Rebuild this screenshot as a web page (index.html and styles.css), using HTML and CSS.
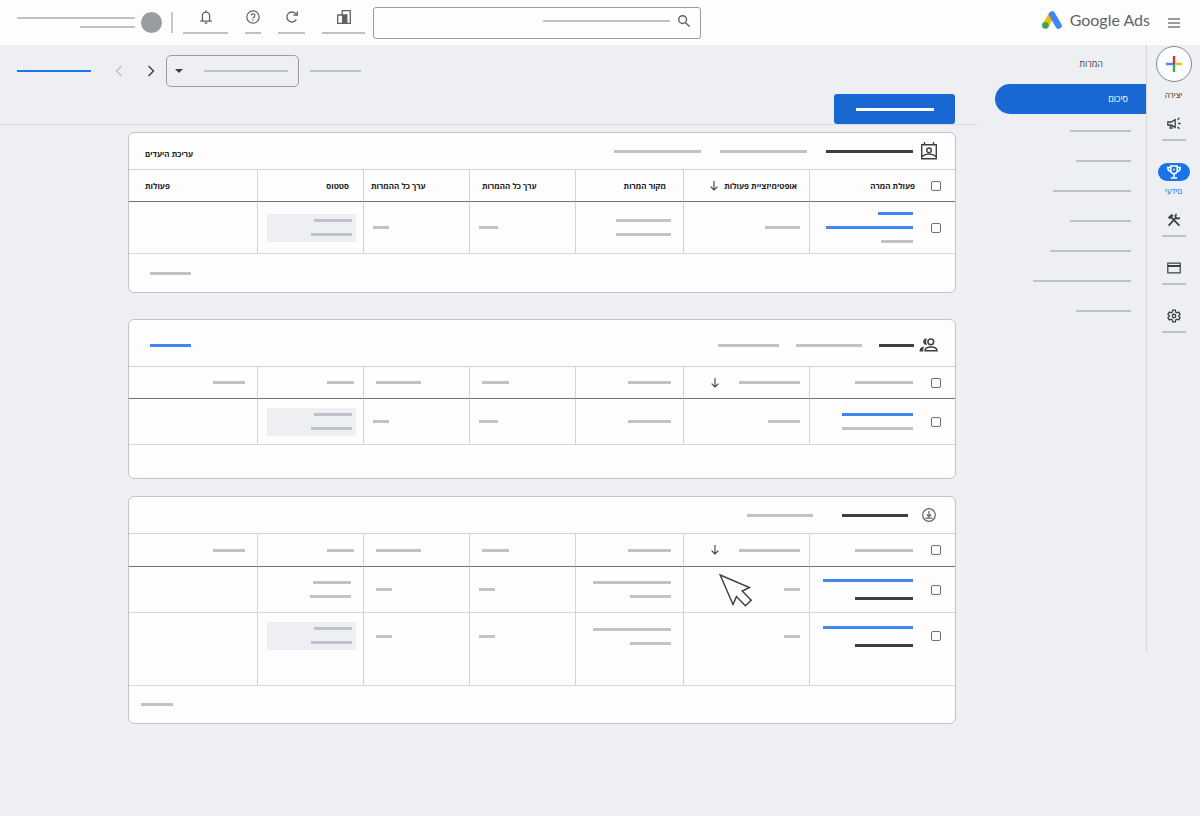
FILE: index.html
```html
<!DOCTYPE html>
<html lang="he" dir="rtl">
<head>
    <meta charset="UTF-8">
    <meta name="viewport" content="width=device-width, initial-scale=1.0">
    <title>Google Ads</title>
    <link rel="stylesheet" href="styles.css">
</head>
<body>

    <header class="header">
        <button class="icon-btn menu-btn" type="button">
            <svg width="12" height="10" viewBox="0 0 12 10"><path d="M0 1h12M0 5h12M0 9h12" stroke="#777a7d" stroke-width="1.4"/></svg>
        </button>
        <a class="logo" href="#" dir="ltr">
            <svg width="20" height="18" viewBox="0 0 20 18">
                <path d="M3.4 14.6L9.4 4.2" stroke="#fbbc04" stroke-width="6.4"/>
                <path d="M10 3.4L16.6 14.6" stroke="#4285f4" stroke-width="6.4" stroke-linecap="round"/>
                <circle cx="3.4" cy="14.4" r="3.3" fill="#34a853"/>
            </svg>
            <span>Google Ads</span>
        </a>
        <label class="search">
            <svg width="12" height="12" viewBox="0 0 12 12" fill="none" stroke="#5f6368" stroke-width="1.4"><circle cx="4.6" cy="4.6" r="3.9"/><path d="M7.4 7.4L11.6 11.6"/></svg>
            <input type="search">
        </label>
        <div class="tools">
            <button class="tool" type="button">
                <svg width="14" height="14" viewBox="0 0 14 14" fill="none" stroke="#5f6368" stroke-width="1.3"><path d="M.7 5v8.3h12.6V.7H5.2V5z"/><path d="M5.6 5h4.2v8H5.6z" fill="#5f6368"/></svg>
                <span class="bar thin w43"></span>
            </button>
            <button class="tool" type="button">
                <svg width="14" height="14" viewBox="0 0 14 14" fill="none" stroke="#5f6368" stroke-width="1.3"><path d="M11.3 9.4A5 5 0 1 1 10.6 3.6L12 5M12.3 1.2V5.2H8.2"/></svg>
                <span class="bar thin w27"></span>
            </button>
            <button class="tool" type="button">
                <svg width="14" height="14" viewBox="0 0 14 14" fill="none" stroke="#5f6368" stroke-width="1.2"><circle cx="7" cy="7" r="6.2"/><path d="M5.2 5.6a1.8 1.8 0 1 1 2.7 1.6C7.2 7.6 7 7.9 7 8.6M7 9.6v1.2"/></svg>
                <span class="bar thin w16"></span>
            </button>
            <button class="tool" type="button">
                <svg width="14" height="14" viewBox="0 0 14 14" fill="none" stroke="#5f6368" stroke-width="1.3"><path d="M3.4 11V5.8a3.6 3.6 0 0 1 7.2 0V11M1.2 11.2h11.6M7 .4v1.8M5.8 13h2.4"/></svg>
                <span class="bar thin w46"></span>
            </button>
        </div>
        <div class="account">
            <span class="avatar"></span>
            <div class="stack gap-7">
                <span class="bar thin w118"></span>
                <span class="bar thin w55"></span>
            </div>
        </div>
    </header>

    <div class="layout">
        <nav class="rail">
            <button class="create" type="button">
                <svg width="16" height="16" viewBox="0 0 16 16" stroke-width="2.4"><path d="M8 0v8" stroke="#d93025"/><path d="M8 8v8" stroke="#34a853"/><path d="M0 8h7" stroke="#4285f4"/><path d="M9 8h7" stroke="#fbbc04"/></svg>
            </button>
            <span class="rail-label">יצירה</span>
            <a class="rail-item" href="#">
                <svg width="14" height="14" viewBox="0 0 14 14" fill="none" stroke="#3c4043" stroke-width="1.3"><path d="M.8 5h3.400l4-2.400v7.800l-4-2.400H.8zM3.200 8.200V12M5 8.200V12M10.600 2.800L12.400 1M11 6.500h2.600M10.600 10l1.800 1.800"/></svg>
                <span class="bar thin w24"></span>
            </a>
            <a class="rail-item current" href="#">
                <span class="pill">
                    <svg width="14" height="14" viewBox="0 0 14 14" fill="none" stroke="#fff" stroke-width="1.5"><path d="M3.8 1h6.4v4.6a3.2 3.2 0 0 1-6.4 0zM3.6 2.4H.8c0 2.4 1 3.8 3 4M10.4 2.4h2.8c0 2.4-1 3.8-3 4M7 9v3.6M3.8 13h6.4"/><path d="M6.2 4.4h1.6"/></svg>
                </span>
                <span class="rail-active">יעדים</span>
            </a>
            <a class="rail-item" href="#">
                <svg width="14" height="14" viewBox="0 0 14 14" fill="none" stroke="#3c4043" stroke-width="1.8"><path d="M1.6 12.6L9.6 4M12.4 12.6L4.4 4.4"/><path d="M1.2 4.6L4.6 1.4 6 2.6 3.4 5.6z" fill="#3c4043" stroke-width="1"/><path d="M9.6 1.2a2.4 2.4 0 1 0 3.2 3.4"/></svg>
                <span class="bar thin w24"></span>
            </a>
            <a class="rail-item" href="#">
                <svg width="14" height="14" viewBox="0 0 14 14" fill="none" stroke="#3c4043" stroke-width="1.2"><path d="M.8 2.2h12.4v9.6H.8z"/><path d="M.8 5h12.4" stroke-width="2"/></svg>
                <span class="bar thin w24"></span>
            </a>
            <a class="rail-item" href="#">
                <svg width="14" height="14" viewBox="0 0 24 24" fill="none" stroke="#3c4043" stroke-width="2.2"><path d="M9.6 2h4.8l.6 3.2 2 1.2 3.1-1.1 2.3 4.1-2.4 2.1v1l2.4 2.1-2.3 4.1-3.1-1.1-2 1.2-.6 3.2H9.6l-.6-3.2-2-1.2-3.1 1.1-2.3-4.1L4 12.5v-1L1.6 9.4l2.3-4.1L7 6.4l2-1.2z"/><circle cx="12" cy="12" r="3"/></svg>
                <span class="bar thin w24"></span>
            </a>
        </nav>

        <nav class="subnav">
            <h2>המרות</h2>
            <a class="active" href="#">סיכום</a>
            <a href="#"><span class="bar thin w61"></span></a>
            <a href="#"><span class="bar thin w55"></span></a>
            <a href="#"><span class="bar thin w78"></span></a>
            <a href="#"><span class="bar thin w61"></span></a>
            <a href="#"><span class="bar thin w81"></span></a>
            <a href="#"><span class="bar thin w98"></span></a>
            <a href="#"><span class="bar thin w55"></span></a>
        </nav>

        <main class="main">
            <div class="toolbar">
                <span class="bar thin w51"></span>
                <label class="picker">
                    <select></select>
                    <svg width="8" height="4" viewBox="0 0 8 4"><path d="M0 0h8L4 4z" fill="#3c4043"/></svg>
                </label>
                <button class="icon-btn" type="button">
                    <svg width="8" height="12" viewBox="0 0 8 12" fill="none" stroke="#3c4043" stroke-width="1.4"><path d="M1.5 1l5 5-5 5"/></svg>
                </button>
                <button class="icon-btn prev" type="button">
                    <svg width="8" height="12" viewBox="0 0 8 12" fill="none" stroke="#bdc1c6" stroke-width="1.4"><path d="M6.5 1l-5 5 5 5"/></svg>
                </button>
                <span class="bar thin link w74"></span>
            </div>
            <div class="actions">
                <button class="primary" type="button"><span class="bar white w78"></span></button>
            </div>

            <!-- purchases -->
            <section class="card">
                <div class="card-head">
                    <svg width="18" height="20" viewBox="0 0 18 20" fill="none" stroke="#3c4043" stroke-width="1.4"><path d="M1.7 3.7h14.6v14H1.7zM4.5 1v3M13.5 1v3M2 15.5c4-3.4 10-3.4 14 0"/><circle cx="9" cy="9.3" r="2.3"/></svg>
                    <span class="bar dark w87"></span>
                    <span class="bar w87"></span>
                    <span class="bar w87"></span>
                    <h3>עריכת היעדים</h3>
                </div>
                <table>
                    <colgroup><col class="c1"><col class="c2"><col class="c3"><col class="c4"><col class="c4"><col class="c4"><col></colgroup>
                    <thead>
                        <tr>
                            <th><div class="check"><input type="checkbox"><span>פעולת המרה</span></div></th>
                            <th class="sorted"><div class="sort"><span>אופטימיזציית פעולות</span><svg width="8" height="10" viewBox="0 0 8 10" fill="none" stroke="#3c4043" stroke-width="1.1"><path d="M4 0v9M.6 5.6L4 9l3.4-3.4"/></svg></div></th>
                            <th class="wide">מקור המרות</th>
                            <th class="left">ערך כל ההמרות</th>
                            <th class="left near">ערך כל ההמרות</th>
                            <th class="inset">סטטוס</th>
                            <th class="left far">פעולות</th>
                        </tr>
                    </thead>
                    <tbody>
                        <tr class="tall">
                            <td><div class="check"><input type="checkbox"><div class="stack"><span class="bar link w35"></span><span class="bar link w87"></span><span class="bar w31"></span></div></div></td>
                            <td><span class="bar w35"></span></td>
                            <td><div class="stack"><span class="bar w55"></span><span class="bar w55"></span></div></td>
                            <td class="left"><span class="bar w19"></span></td>
                            <td class="left"><span class="bar w16"></span></td>
                            <td class="status"><div class="stack shaded"><span class="bar w38"></span><span class="bar w41"></span></div></td>
                            <td></td>
                        </tr>
                    </tbody>
                </table>
                <div class="card-foot"><span class="bar w41"></span></div>
            </section>

            <!-- leads -->
            <section class="card card-leads">
                <div class="card-head">
                    <svg width="19" height="14" viewBox="0 0 19 14" fill="none" stroke="#3c4043" stroke-width="1.5"><circle cx="11.8" cy="3.8" r="2.9"/><path d="M6 12.7c0-5 12-5 12 0z"/><path d="M8 .6C3-.2 3 7.6 8 6.8 6.8 5 6.8 2.4 8 .6zM4.5 8.6C1.5 9.4.5 11 .5 13.5h3.8c0-2 0-3.4.7-4.9z" fill="#3c4043" stroke="none"/></svg>
                    <span class="bar dark w35"></span>
                    <span class="bar w65"></span>
                    <span class="bar w61"></span>
                    <span class="bar link title-bar w41"></span>
                </div>
                <table>
                    <colgroup><col class="c1"><col class="c2"><col class="c3"><col class="c4"><col class="c4"><col class="c4"><col></colgroup>
                    <thead>
                        <tr>
                            <th><div class="check"><input type="checkbox"><span class="bar w58"></span></div></th>
                            <th><div class="sort spread"><span class="bar w61"></span><svg width="8" height="10" viewBox="0 0 8 10" fill="none" stroke="#3c4043" stroke-width="1.1"><path d="M4 0v9M.6 5.6L4 9l3.4-3.4"/></svg></div></th>
                            <th><span class="bar w43"></span></th>
                            <th class="left"><span class="bar w27"></span></th>
                            <th class="left"><span class="bar w46"></span></th>
                            <th class="close"><span class="bar w27"></span></th>
                            <th><span class="bar w31"></span></th>
                        </tr>
                    </thead>
                    <tbody>
                        <tr>
                            <td><div class="check"><input type="checkbox"><div class="stack"><span class="bar link w71"></span><span class="bar w71"></span></div></div></td>
                            <td><span class="bar w31"></span></td>
                            <td><span class="bar w43"></span></td>
                            <td class="left"><span class="bar w19"></span></td>
                            <td class="left"><span class="bar w16"></span></td>
                            <td class="status"><div class="stack shaded"><span class="bar w38"></span><span class="bar w41"></span></div></td>
                            <td></td>
                        </tr>
                    </tbody>
                </table>
                <div class="card-foot"></div>
            </section>

            <!-- downloads -->
            <section class="card card-downloads">
                <div class="card-head">
                    <svg width="14" height="14" viewBox="0 0 14 14" fill="none" stroke="#5f6368" stroke-width="1.2"><circle cx="7" cy="7" r="6.3"/><path d="M7 3v5.5M4.8 6.5L7 8.7l2.2-2.2M3.5 10.2h7"/></svg>
                    <span class="bar dark w65"></span>
                    <span class="bar w65"></span>
                </div>
                <table>
                    <colgroup><col class="c1"><col class="c2"><col class="c3"><col class="c4"><col class="c4"><col class="c4"><col></colgroup>
                    <thead>
                        <tr>
                            <th><div class="check"><input type="checkbox"><span class="bar w58"></span></div></th>
                            <th><div class="sort spread"><span class="bar w61"></span><svg width="8" height="10" viewBox="0 0 8 10" fill="none" stroke="#3c4043" stroke-width="1.1"><path d="M4 0v9M.6 5.6L4 9l3.4-3.4"/></svg></div></th>
                            <th><span class="bar w43"></span></th>
                            <th class="left"><span class="bar w27"></span></th>
                            <th class="left"><span class="bar w46"></span></th>
                            <th class="close"><span class="bar w27"></span></th>
                            <th><span class="bar w31"></span></th>
                        </tr>
                    </thead>
                    <tbody>
                        <tr>
                            <td><div class="check"><input type="checkbox"><div class="stack gap-15"><span class="bar link w90"></span><span class="bar dark w58"></span></div></div></td>
                            <td><span class="bar w16"></span></td>
                            <td><div class="stack"><span class="bar w78"></span><span class="bar w41"></span></div></td>
                            <td class="left"><span class="bar w16"></span></td>
                            <td class="left near"><span class="bar w16"></span></td>
                            <td><div class="stack"><span class="bar w38"></span><span class="bar w41"></span></div></td>
                            <td></td>
                        </tr>
                        <tr class="last">
                            <td><div class="check"><input type="checkbox"><div class="stack gap-15"><span class="bar link w90"></span><span class="bar dark w58"></span></div></div></td>
                            <td><span class="bar w16"></span></td>
                            <td><div class="stack"><span class="bar w78"></span><span class="bar w41"></span></div></td>
                            <td class="left"><span class="bar w16"></span></td>
                            <td class="left near"><span class="bar w16"></span></td>
                            <td class="status"><div class="stack shaded"><span class="bar w38"></span><span class="bar w41"></span></div></td>
                            <td></td>
                        </tr>
                    </tbody>
                </table>
                <div class="card-foot"><span class="bar w31"></span></div>
                <svg class="cursor" width="34" height="34" viewBox="0 0 34 34"><path d="M2.2 2L31.500 14.500 24.200 18 33.200 27.200 27.400 32.800 18.400 23.600 15 31.500z" fill="#fdfdfd" stroke="#3c4043" stroke-width="1.4"/></svg>
            </section>
        </main>
    </div>

</body>
</html>
```

FILE: styles.css
```css
* {
    box-sizing: border-box;
}
body {
    margin: 0;
    min-height: 100vh;
    background: #eeeff3;
    color: #202124;
    font-family: "Open Sans", "DejaVu Sans", sans-serif;
    font-size: 9px;
}
svg {
    display: block;
    flex: none;
}
button {
    border: 0;
    padding: 0;
    background: none;
    font: inherit;
}
a {
    text-decoration: none;
    color: inherit;
}

/* placeholder lines */
.bar {
    display: block;
    flex: none;
    height: 3px;
    background: #bdc3c7;
}
.bar.thin { height: 2px; }
.bar.link { background: #4285f4; }
.bar.dark { background: #3c4043; }
.bar.white { background: #fff; }
.w16 { width: 16px; }
.w19 { width: 19px; }
.w24 { width: 24px; }
.w27 { width: 27px; }
.w31 { width: 32px; }
.w35 { width: 35px; }
.w38 { width: 38px; }
.w41 { width: 41px; }
.w43 { width: 43px; }
.w46 { width: 45px; }
.w51 { width: 51px; }
.w55 { width: 55px; }
.w58 { width: 58px; }
.w61 { width: 61px; }
.w65 { width: 66px; }
.w71 { width: 71px; }
.w74 { width: 74px; }
.w78 { width: 78px; }
.w81 { width: 81px; }
.w87 { width: 87px; }
.w90 { width: 90px; }
.w98 { width: 98px; }
.w118 { width: 118px; }

.stack {
    display: flex;
    flex-direction: column;
    align-items: flex-start;
    gap: 11px;
}
.stack.gap-7 {
    gap: 7px;
}
.stack.gap-15 {
    gap: 15px;
}

/* header */
.header {
    display: flex;
    align-items: center;
    height: 45px;
    padding: 0 20px 0 17px;
    background: #fdfdfd;
}
.menu-btn {
    margin-left: 18px;
}
.logo {
    display: flex;
    align-items: center;
    gap: 8px;
    padding-bottom: 6px;
    font-family: Lato, sans-serif;
    font-size: 16px;
    line-height: 20px;
    color: #5f6368;
}
.search {
    display: flex;
    align-items: center;
    width: 328px;
    height: 32px;
    margin-right: auto;
    padding: 0 10px 4px;
    border: 1px solid #9a9c9f;
    border-radius: 3px;
}
.search input {
    flex: 1;
    min-width: 0;
    height: 18px;
    margin-right: 8px;
    padding: 0;
    border: 0;
    outline: 0;
    background: linear-gradient(#bdc3c7, #bdc3c7) right center / 127px 2px no-repeat;
}
.tools {
    display: flex;
    align-items: flex-start;
    gap: 17px;
    margin-right: 8px;
    padding-bottom: 1px;
}
.tool {
    display: flex;
    flex-direction: column;
    align-items: center;
    gap: 8px;
}
.account {
    display: flex;
    align-items: center;
    gap: 6px;
    margin-right: 10px;
    padding-right: 9px;
    border-right: 2px solid #c4c8cb;
}
.avatar {
    width: 21px;
    height: 21px;
    border-radius: 50%;
    background: #979da1;
}

/* right rail */
.layout {
    display: flex;
    align-items: flex-start;
}
.rail {
    display: flex;
    flex-direction: column;
    align-items: center;
    width: 54px;
    min-height: 608px;
    padding-top: 1px;
    border-left: 1px solid #d5d8dc;
}
.create {
    display: flex;
    align-items: center;
    justify-content: center;
    width: 36px;
    height: 36px;
    border: 1px solid #80868b;
    border-radius: 50%;
    background: #fdfdfd;
}
.rail-label {
    margin: 7px 0 8px;
    font-size: 8px;
    line-height: 12px;
}
.rail-item {
    display: flex;
    flex-direction: column;
    align-items: center;
    gap: 8px;
    height: 48px;
    padding-top: 8px;
}
.rail-item.current {
    gap: 6px;
    padding-top: 6px;
}
.pill {
    display: flex;
    align-items: center;
    justify-content: center;
    width: 32px;
    height: 18px;
    border-radius: 9px;
    background: #1a73e8;
}
.rail-active {
    direction: ltr;
    unicode-bidi: bidi-override;
    font-size: 8px;
    line-height: 8px;
    color: #1a73e8;
}

/* section nav */
.subnav {
    width: 151px;
}
.subnav h2 {
    margin: 12px 43px 14px 0;
    font-size: 9px;
    font-weight: 400;
    line-height: 13px;
    color: #3c4043;
}
.subnav a {
    display: flex;
    align-items: center;
    height: 30px;
    padding-right: 15px;
}
.subnav .active {
    margin-bottom: 2px;
    padding: 0 18px 2px 0;
    border-radius: 15px 0 0 15px;
    background: #1967d2;
    color: #fff;
}

/* main */
.main {
    flex: 1;
    min-width: 0;
    padding: 10px 39px 0 128px;
}
.toolbar {
    display: flex;
    align-items: center;
    justify-content: flex-end;
    gap: 11px;
    height: 32px;
    margin-left: -111px;
}
.toolbar .link {
    margin-right: 13px;
    background: #1a73e8;
}
.toolbar .prev {
    margin-right: 13px;
}
.picker {
    display: flex;
    align-items: center;
    width: 133px;
    height: 32px;
    padding: 0 10px 0 8px;
    border: 1px solid #9a9c9f;
    border-radius: 5px;
}
.picker select {
    flex: 1;
    min-width: 0;
    height: 20px;
    border: 0;
    appearance: none;
    background: linear-gradient(#bdc3c7, #bdc3c7) right center / 84px 2px no-repeat;
}
.actions {
    margin: 0 -22px 7px -128px;
    padding: 7px 23px 0;
    border-bottom: 1px solid #d9dbdf;
}
.primary {
    display: flex;
    align-items: center;
    justify-content: center;
    width: 121px;
    height: 30px;
    border-radius: 3px;
    background: #1967d2;
}
.card {
    position: relative;
    border: 1px solid #bfc4c9;
    border-radius: 6px;
    background: #fdfdfd;
}
.card-leads {
    margin-top: 26px;
}
.card-downloads {
    margin-top: 17px;
}
.card-head {
    display: flex;
    align-items: center;
    gap: 19px;
    height: 36px;
    padding: 0 17px 0 16px;
}
.card-head svg {
    margin-left: -12px;
}
.card-head h3 {
    margin: 5px auto 0 0;
    font-size: 8px;
    font-weight: 700;
    line-height: 13px;
}
.card-leads .card-head {
    height: 46px;
    padding: 4px 17px 0 21px;
    gap: 17px;
}
.title-bar {
    margin-right: auto;
}
.card-downloads .card-head {
    padding-right: 19px;
    gap: 29px;
}
.card-downloads .card-head svg {
    margin-left: -15px;
}
table {
    width: 100%;
    table-layout: fixed;
    border-spacing: 0;
}
.c1 { width: 146px; }
.c2 { width: 126px; }
.c3 { width: 108px; }
.c4 { width: 106px; }
th, td {
    padding: 0 12px 0 10px;
    border-left: 1px solid #d0d3d7;
    border-bottom: 1px solid #d5d8dc;
    text-align: right;
}
th:last-child, td:last-child {
    border-left: 0;
}
th:first-child, td:first-child {
    padding-right: 14px;
}
th:nth-child(2), td:nth-child(2) {
    padding-right: 9px;
}
th {
    height: 33px;
    padding-left: 12px;
    border-top: 1px solid #d0d3d7;
    border-bottom-color: #6f7275;
    font-size: 8px;
    font-weight: 700;
    line-height: 13px;
    white-space: nowrap;
}
td {
    height: 46px;
}
.tall td {
    height: 52px;
}
.card-downloads th {
    height: 34px;
}
.last td {
    height: 73px;
    padding-bottom: 26px;
}
.left {
    padding-left: 10px;
    direction: ltr;
    text-align: left;
}
th.left {
    padding-left: 13px;
}
td.near {
    padding-left: 13px;
}
th.near {
    padding-left: 8px;
}
th.far {
    padding-left: 16px;
}
th.wide {
    padding-right: 17px;
}
th.inset {
    padding-right: 14px;
}
th.close {
    padding-right: 9px;
}
th.sorted:nth-child(2) {
    padding-right: 12px;
}
.check {
    display: flex;
    align-items: center;
    gap: 18px;
}
th .check span:not(.bar) {
    margin-right: -2px;
}
.check input {
    appearance: none;
    width: 10px;
    height: 10px;
    margin: 0;
    border: 1px solid #6b6f73;
    border-radius: 2px;
}
.sort {
    display: flex;
    align-items: center;
    gap: 6px;
}
.sort.spread {
    gap: 20px;
}
td.status {
    padding: 0 7px 0 9px;
}
.last td.status {
    padding-bottom: 26px;
}
.shaded {
    height: 28px;
    padding: 5px 4px 0 0;
    background: #eeeff3;
}
.card-foot {
    display: flex;
    align-items: center;
    justify-content: flex-end;
    height: 38px;
    padding-left: 21px;
}
.card-leads .card-foot {
    height: 33px;
}
.card-downloads .card-foot {
    height: 37px;
    padding-left: 12px;
}
.cursor {
    position: absolute;
    top: 76px;
    right: 203px;
}
```
